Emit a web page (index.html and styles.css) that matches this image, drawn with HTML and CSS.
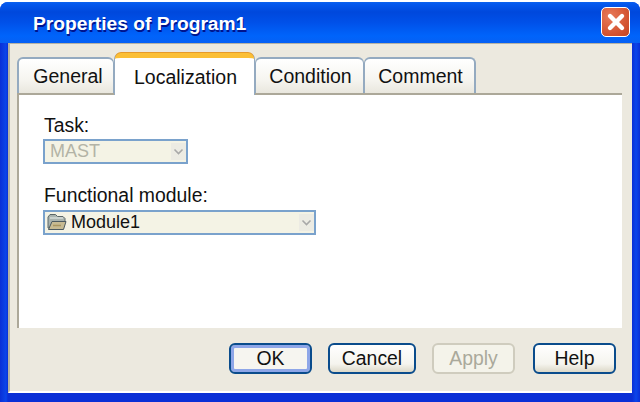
FILE: index.html
```html
<!DOCTYPE html>
<html lang="en">
<head>
<meta charset="utf-8">
<title>Properties of Program1</title>
<link rel="stylesheet" href="styles.css">
</head>
<body>
<div class="window">
  <header class="titlebar">
    <span class="title">Properties of Program1</span>
    <button class="close" aria-label="Close">
      <svg width="20" height="20" viewBox="0 0 20 20"><path d="M4 4 16 16M16 4 4 16" stroke="#fff" stroke-width="4.4" stroke-linecap="round" fill="none"/></svg>
    </button>
  </header>
  <main class="dialog">
    <div class="tabs">
      <div class="tab tab-general">General</div>
      <div class="tab tab-active">Localization</div>
      <div class="tab tab-condition">Condition</div>
      <div class="tab tab-comment">Comment</div>
    </div>
    <section class="panel">
      <label class="label">Task:</label>
      <div class="combo combo-task disabled">
        <span class="value">MAST</span>
        <span class="arrow"><svg width="11" height="7" viewBox="0 0 11 7"><path d="M1.5 1.5 5.5 5.5 9.5 1.5" stroke="#a8a8a8" stroke-width="1.6" fill="none"/></svg></span>
      </div>
      <label class="label label-module">Functional module:</label>
      <div class="combo combo-module">
        <svg class="folder" width="20" height="19" viewBox="0 0 20 19">
          <path d="M1 15V4L3 1.5H8.5L10.5 3.5H16L18 5.5V9L16 16Z" fill="#a9b3ae" stroke="#5a6668"/>
          <path d="M3 5H16" stroke="#d6dcd8" stroke-width="1.5"/>
          <path d="M1.5 16.5 5 8.5H19L16.5 16.5Z" fill="#c7bb92" stroke="#4c5a60"/>
          <path d="M6 12.5H14" stroke="#a8955f" stroke-width="1.6"/>
        </svg>
        <span class="value">Module1</span>
        <span class="arrow"><svg width="11" height="7" viewBox="0 0 11 7"><path d="M1.5 1.5 5.5 5.5 9.5 1.5" stroke="#a8a8a8" stroke-width="1.6" fill="none"/></svg></span>
      </div>
    </section>
    <footer class="actions">
      <button class="btn btn-default">OK</button>
      <button class="btn btn-cancel">Cancel</button>
      <button class="btn btn-disabled" disabled>Apply</button>
      <button class="btn btn-help">Help</button>
    </footer>
  </main>
</div>
</body>
</html>
```
FILE: styles.css
```css
* { box-sizing: border-box; }
html, body { margin: 0; height: 100%; background: #fff; overflow: hidden; }
body { padding-top: 2px; font-family: "Liberation Sans", Arial, sans-serif; color: #111; }

.window {
  width: 640px;
  height: 400px;
  display: flex;
  flex-direction: column;
  border-radius: 8px 8px 0 0;
  background: linear-gradient(90deg, #0a2fd6 0, #0b45ea 6px, #0a2fd6 8px, #0a2fd6 632px, #0b45ea 636px, #0a2fd6 640px);
  padding: 0 8px 9px 8px;
  overflow: hidden;
}
.titlebar {
  flex: none;
  height: 41px;
  margin: 0 -8px;
  padding: 3px 10px 1px 33px;
  display: flex;
  align-items: center;
  justify-content: space-between;
  background: linear-gradient(180deg, #0b62ee 0, #0458ee 2px, #0048dc 10px, #0050e8 20px, #0064fb 34px, #0660f4 41px);
}
.title {
  font-size: 19.2px;
  font-weight: 700;
  color: #fff;
  text-shadow: 1px 2px 0 #00138c;
}
.close {
  width: 29px;
  height: 30px;
  padding: 0;
  margin-top: -3px;
  border: 1.5px solid #fff;
  border-radius: 5px;
  background: radial-gradient(circle at 30% 30%, #e87a5a, #d2512e 70%, #c24522);
  display: flex;
  align-items: center;
  justify-content: center;
}
.dialog {
  flex: 1;
  min-height: 0;
  display: flex;
  flex-direction: column;
  background: #ece9df;
  border-top: 1px solid #b6b3a6;
  border-left: 2px solid #b4b1a3;
  border-bottom: 2px solid #fff;
  padding: 9px 10px 0 7px;
}
.tabs {
  flex: none;
  height: 42px;
  display: flex;
  align-items: flex-end;
  position: relative;
  z-index: 1;
}
.tab {
  height: 36px;
  margin-bottom: 2px;
  display: flex;
  align-items: center;
  justify-content: center;
  padding-left: 2px;
  font-size: 19.5px;
  border: 2px solid #94aac0;
  border-bottom: 0;
  border-right-width: 1px;
  border-left-width: 1px;
  border-radius: 6px 6px 0 0;
  background: linear-gradient(180deg, #fff 0, #f6f5f0 60%, #e9e7de 100%);
}
.tab-general { width: 97px; border-left-width: 2px; padding-left: 4px; }
.tab-condition { width: 109px; }
.tab-comment { width: 112px; border-right-width: 2px; }
.tab-active {
  width: 139px;
  height: 42px;
  margin: 0 1px;
  padding-top: 2px;
  background: #fff;
  border: 0;
  border-top: 5px solid #fbbf35;
  border-radius: 6px 6px 0 0;
  box-shadow: 0 -1px 0 #e69a2a, -1px 0 0 #94aac0, 1px 0 0 #94aac0;
}
.panel {
  flex: 1;
  min-height: 0;
  margin-top: -2px;
  background: #fff;
  border-top: 2px solid #aca899;
  border-left: 2px solid #aca899;
  padding: 19px 0 0 25px;
  display: flex;
  flex-direction: column;
  align-items: flex-start;
}
.label { font-size: 19.4px; line-height: 22px; height: 22px; }
.label-module { margin-top: 20px; }
.combo {
  display: flex;
  align-items: center;
  height: 25px;
  margin: 3px 0 0 -1px;
  padding: 0 0 0 3px;
  border: 2px solid #7aa2cc;
  background: #f4f3e5;
  font-size: 18px;
}
.combo-task { width: 145px; padding-left: 4px; }
.combo-module { width: 273px; margin-top: 4px; }
.value { flex: 1; padding-left: 1px; }
.disabled .value { color: #b3b3a6; }
.folder { flex: none; margin-right: 3px; margin-left: -1px; }
.arrow {
  flex: none;
  width: 15px;
  height: 17px;
  display: flex;
  align-items: center;
  justify-content: center;
  background: #ecebe3;
}
.actions {
  flex: none;
  height: 63px;
  display: flex;
  justify-content: flex-end;
  gap: 16px;
  padding: 15px 6px 0 0;
}
.btn {
  width: 83px;
  height: 31px;
  padding: 0;
  border: 2px solid #0a4c8c;
  border-radius: 6px;
  font: 19.4px "Liberation Sans", Arial, sans-serif;
  color: #111;
  background: linear-gradient(180deg, #fff 0, #f5f4ee 70%, #dcd8c8 100%);
}
.btn-cancel { width: 88px; }
.btn-help { margin-left: 2px; }
.btn-default {
  box-shadow: inset 0 0 0 3px #8ea6e8;
  background: #f6f5f0;
}
.btn-disabled {
  color: #aaa99b;
  border-color: #cfccbe;
  background: #f4f3ea;
}
```
